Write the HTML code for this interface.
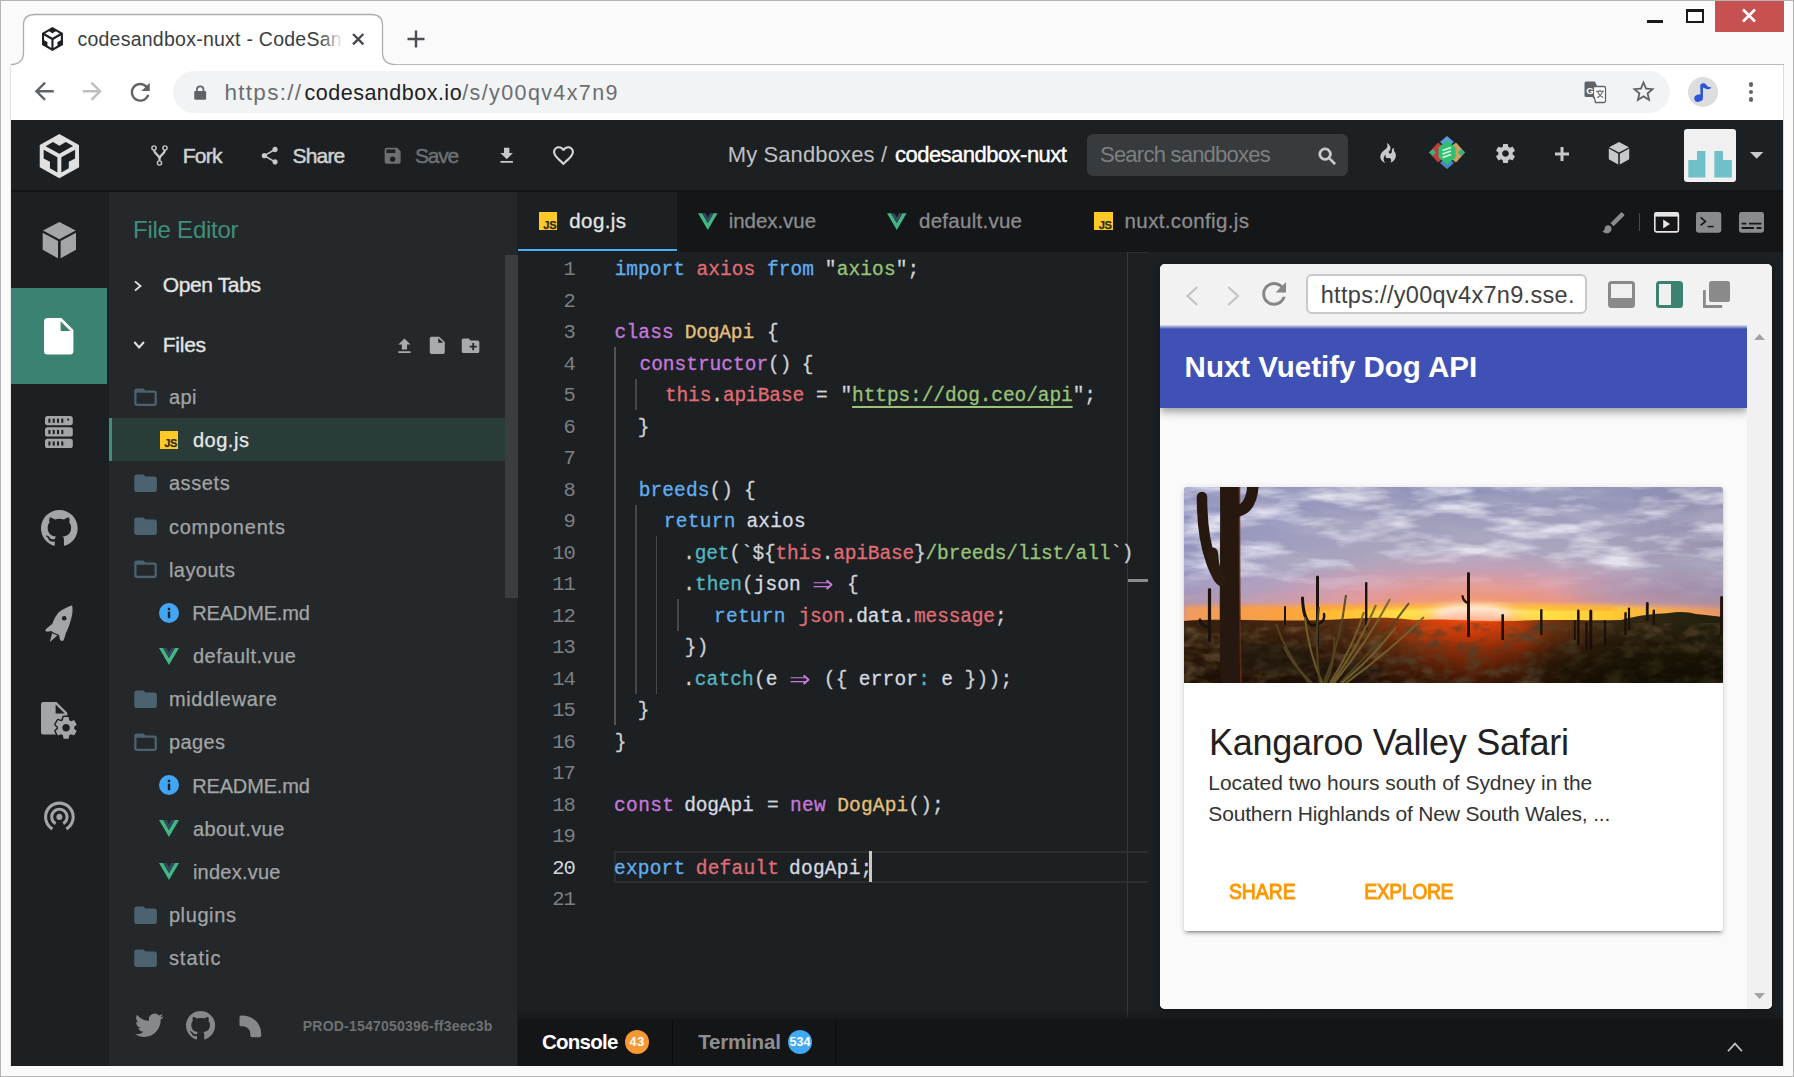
<!DOCTYPE html>
<html lang="en">
<head>
<meta charset="utf-8">
<title>codesandbox-nuxt - CodeSandbox</title>
<style>
*{box-sizing:border-box;margin:0;padding:0}
html,body{width:1794px;height:1077px;overflow:hidden;background:#fafafa}
body{position:relative;font-family:"Liberation Sans",sans-serif;color:#fff}
.a{position:absolute}
.t{position:absolute;white-space:nowrap;line-height:1}
svg{position:absolute;overflow:visible}
#frame{left:0;top:0;width:1794px;height:1077px;border:1px solid #b4b4b4;background:#fafafa}
#tabline{left:11px;top:64px;width:1773px;height:1px;background:#b9b9b9}
#toolbar{left:11px;top:65px;width:1772px;height:55px;background:#fff}
#pageL{left:10px;top:65px;width:1px;height:1002px;background:#e4e4e4}
#pageR{left:1783px;top:65px;width:1px;height:1002px;background:#dcdcdc}
#omni{left:173px;top:71px;width:1497px;height:42px;border-radius:21px;background:#f1f3f4}
#app{left:11px;top:120px;width:1772px;height:946px;background:#1c2022;overflow:hidden}
#hdr{left:0;top:0;width:1772px;height:70px;background:#1c2022}
#hdrline{left:0;top:70px;width:1772px;height:2px;background:#111517}
#nav{left:0;top:72px;width:96px;height:874px;background:#1c2022}
#navsel{left:0;top:168px;width:96px;height:96px;background:#3a8372}
#side{left:98px;top:72px;width:408px;height:874px;background:#24282a}
#sbar{display:none}
#sthumb{left:494px;top:135px;width:13px;height:343px;background:#3a3e40}
#edtabs{left:507px;top:72px;width:1265px;height:60px;background:#151618}
#tab1{left:507px;top:72px;width:159px;height:59.3px;background:#1c2022}
#editor{left:507px;top:132px;width:641px;height:767px;background:#1c2022}
#bottom{left:507px;top:899px;width:1265px;height:47px;background:#141618}
#pv{left:1149px;top:144px;width:612px;height:745px;background:#fafafa;border-radius:5px;overflow:hidden;box-shadow:0 2px 8px rgba(0,0,0,.35)}
.c{position:absolute;white-space:pre;font-family:"Liberation Mono","DejaVu Sans Mono",monospace;font-size:19.5px;line-height:31.5px;height:31.5px;-webkit-text-stroke:0.3px}
.ln{position:absolute;left:540px;width:35px;text-align:right;font-family:"Liberation Mono",monospace;font-size:20.5px;line-height:31.5px;color:#7c7f82;letter-spacing:-0.9px}

</style>
</head>
<body>
<div id="frame" class="a"></div>
<div id="tabline" class="a"></div>
<div id="toolbar" class="a"></div>
<div id="pageL" class="a"></div>
<div id="pageR" class="a"></div>
<div id="omni" class="a"></div>
<svg style="left:0px;top:0px;" width="420" height="70" viewBox="0 0 420 70"><path d="M11,64.5 C19,64.5 23.5,60 23.5,52 L23.5,25 C23.5,18 28,14.5 35,14.5 L371,14.5 C378,14.5 382.5,18 382.5,25 L382.5,52 C382.5,60 387,64.5 395,64.5 L395,66 L11,66 Z" fill="#fff"/><path d="M11,64.5 C19,64.5 23.5,60 23.5,52 L23.5,25 C23.5,18 28,14.5 35,14.5 L371,14.5 C378,14.5 382.5,18 382.5,25 L382.5,52 C382.5,60 387,64.5 395,64.5" fill="none" stroke="#adadad" stroke-width="1.3"/></svg>
<svg style="left:41px;top:27px;" width="23" height="24" viewBox="1.5 0 22 24"><path d="M2 6l10.455-6L22.91 6 23 17.95 12.455 24 2 18V6zm2.088 2.481v4.757l3.345 1.86v3.516l3.972 2.296v-8.272L4.088 8.481zm16.739 0l-7.317 4.157v8.272l3.972-2.296V15.1l3.345-1.861V8.48zM5.134 6.601l7.303 4.144 7.32-4.18-3.871-2.197-3.41 1.945-3.43-1.968L5.133 6.6z" fill="#1c2022" /></svg>
<div class="t" style="left:77.40px;top:30.07px;font-size:19.5px;color:#3a3d41;letter-spacing:0.249px;width:269px;overflow:hidden;">codesandbox-nuxt - CodeSandbox</div>
<div class="a" style="left:320px;top:24px;width:27px;height:30px;background:linear-gradient(90deg,rgba(255,255,255,0),#fff 88%)"></div>
<svg style="left:352.2px;top:33.2px;" width="12.4" height="12.4" viewBox="0 0 12 12"><path d="M1,1 L11,11 M11,1 L1,11" stroke="#46494d" stroke-width="2.3" fill="none"/></svg>
<svg style="left:407px;top:30px;" width="18" height="18" viewBox="0 0 18 18"><path d="M9,0.5 V17.5 M0.5,9 H17.5" stroke="#4a4d51" stroke-width="2.4" fill="none"/></svg>
<div class="a" style="left:1647px;top:20px;width:16px;height:3px;background:#1a1a1a"></div>
<div class="a" style="left:1686px;top:9px;width:18px;height:14px;border:2px solid #1a1a1a;border-top-width:3px;background:#fff"></div>
<div class="a" style="left:1715px;top:1px;width:69px;height:31px;background:#c75050"></div>
<svg style="left:1742px;top:9px;" width="14" height="13" viewBox="0 0 14 13"><path d="M1,0.5 L13,12.5 M13,0.5 L1,12.5" stroke="#fff" stroke-width="2.6" fill="none"/></svg>
<svg style="left:29.8px;top:77.2px;" width="28.5" height="28.5" viewBox="0 0 24 24"><path d="M20 11H7.83l5.59-5.59L12 4l-8 8 8 8 1.41-1.41L7.83 13H20v-2z" fill="#5f6368" /></svg>
<svg style="left:77.8px;top:77.2px;" width="28.5" height="28.5" viewBox="0 0 24 24"><path d="M12 4l-1.41 1.41L16.17 11H4v2h12.17l-5.58 5.59L12 20l8-8z" fill="#bcbec1" /></svg>
<svg style="left:126.4px;top:77.7px;" width="28.5" height="28.5" viewBox="0 0 24 24"><path d="M17.65 6.35C16.2 4.9 14.21 4 12 4c-4.42 0-7.99 3.58-7.99 8s3.57 8 7.99 8c3.73 0 6.84-2.55 7.73-6h-2.08c-.82 2.33-3.04 4-5.65 4-3.31 0-6-2.69-6-6s2.69-6 6-6c1.66 0 3.14.69 4.22 1.78L13 11h7V4l-2.35 2.35z" fill="#5f6368" /></svg>
<svg style="left:194px;top:85px;" width="12.4" height="15.4" viewBox="0 0 14 16"><rect x="0.3" y="6" width="13.4" height="10" rx="1.5" fill="#5f6368"/><path d="M3.3,7 V4.6 a3.7,3.7 0 0 1 7.4,0 V7" fill="none" stroke="#5f6368" stroke-width="1.9"/></svg>
<div class="t" style="left:224.50px;top:82.21px;font-size:22.5px;color:#6a6e73;letter-spacing:1.281px;">https://</div>
<div class="t" style="left:304.60px;top:82.70px;font-size:21.5px;color:#202124;letter-spacing:0.491px;">codesandbox.io</div>
<div class="t" style="left:462.20px;top:82.70px;font-size:21.5px;color:#6a6e73;letter-spacing:1.388px;">/s/y00qv4x7n9</div>
<svg style="left:1584px;top:81px;" width="22" height="22" viewBox="0 0 22 22"><path d="M2,0.5 h9 l2.2,5 h-2 V16 H2 a1.5,1.5 0 0 1 -1.5,-1.5 V2 A1.5,1.5 0 0 1 2,0.5z" fill="#5f6368"/><path d="M9.5,5.5 h10.5 a1.5,1.5 0 0 1 1.5,1.5 V20 a1.5,1.5 0 0 1 -1.5,1.5 H11.5 l-1.2,-5 h-0.8z" fill="#fff" stroke="#5f6368" stroke-width="1.3"/><path d="M12,10.2 h8 M16,8.8 v1.4 M18.6,10.2 c-0.8,3.2 -3,5.4 -5.6,6.6 M13.6,10.4 c0.9,2.8 2.8,4.8 5.6,6.2" fill="none" stroke="#5f6368" stroke-width="1.1"/><text x="2.2" y="12.6" font-family="Liberation Sans,sans-serif" font-weight="700" font-size="9.5" fill="#fff">G</text></svg>
<svg style="left:1629.5px;top:78.2px;" width="27" height="27" viewBox="0 0 24 24"><path d="M22 9.24l-7.19-.62L12 2 9.19 8.63 2 9.24l5.46 4.73L5.82 21 12 17.27 18.18 21l-1.63-7.03L22 9.24zM12 15.4l-3.76 2.27 1-4.28-3.32-2.88 4.38-.38L12 6.1l1.71 4.04 4.38.38-3.32 2.88 1 4.28L12 15.4z" fill="#5f6368" /></svg>
<div class="a" style="left:1688px;top:77px;width:30px;height:30px;border-radius:50%;background:#dcdddf"></div>
<svg style="left:1693px;top:82px;" width="20" height="21" viewBox="0 0 20 21"><ellipse cx="5.6" cy="16.2" rx="4.4" ry="3.6" fill="#2f55d4" transform="rotate(-20 5.6 16.2)"/><path d="M7.6,16 L7.2,3.2 C8.5,0.8 12,0.6 13.5,3 C14.8,5 16.6,5.6 18.4,5 C17.4,7.6 14.2,8 11.6,6.2 L10,5.6 L10,16z" fill="#2f55d4"/></svg>
<div class="a" style="left:1748.7px;top:82px;width:4.6px;height:4.6px;border-radius:50%;background:#5f6368"></div>
<div class="a" style="left:1748.7px;top:89.7px;width:4.6px;height:4.6px;border-radius:50%;background:#5f6368"></div>
<div class="a" style="left:1748.7px;top:97.3px;width:4.6px;height:4.6px;border-radius:50%;background:#5f6368"></div>
<div id="app" class="a">
<div id="hdr" class="a"></div>
<div id="hdrline" class="a"></div>
<div id="nav" class="a"></div>
<div id="navsel" class="a"></div>
<div id="side" class="a"></div>
<div id="sbar" class="a"></div>
<div id="sthumb" class="a"></div>
<div id="edtabs" class="a"></div>
<div id="tab1" class="a"></div>
<div id="editor" class="a"></div>
<div id="bottom" class="a"></div>
<div class="a" style="left:-11px;top:-120px">
<svg style="left:36.048px;top:134.2px;" width="45.024" height="44.304" viewBox="0 0 24 24" preserveAspectRatio="none"><path d="M2 6l10.455-6L22.91 6 23 17.95 12.455 24 2 18V6zm2.088 2.481v4.757l3.345 1.86v3.516l3.972 2.296v-8.272L4.088 8.481zm16.739 0l-7.317 4.157v8.272l3.972-2.296V15.1l3.345-1.861V8.48zM5.134 6.601l7.303 4.144 7.32-4.18-3.871-2.197-3.41 1.945-3.43-1.968L5.133 6.6z" fill="#e0e0e0" /></svg>
<svg style="left:150px;top:144px;" width="19" height="23" viewBox="0 0 19 23"><g fill="none" stroke="#c8c9ca" stroke-width="1.4"><circle cx="4" cy="4" r="2.1"/><circle cx="15" cy="4" r="2.1"/><circle cx="9.5" cy="19" r="2.1"/></g><path d="M4,6.2 C4.4,10 9.5,11.2 9.5,14.4 V16.8 M15,6.2 C14.6,10 9.5,11.2 9.5,14.4" fill="none" stroke="#c8c9ca" stroke-width="2.3"/></svg>
<div class="t" style="left:182.70px;top:145.34px;font-size:21px;color:#cfd0d1;letter-spacing:-0.733px;-webkit-text-stroke:0.5px #cfd0d1;">Fork</div>
<svg style="left:258.6px;top:145px;" width="21.4" height="21.4" viewBox="0 0 24 24"><path d="M18 16.08c-.76 0-1.44.3-1.96.77L8.91 12.7c.05-.23.09-.46.09-.7s-.04-.47-.09-.7l7.05-4.11c.54.5 1.25.81 2.04.81 1.66 0 3-1.34 3-3s-1.34-3-3-3-3 1.34-3 3c0 .24.04.47.09.7L8.04 9.81C7.5 9.31 6.79 9 6 9c-1.66 0-3 1.34-3 3s1.34 3 3 3c.79 0 1.5-.31 2.04-.81l7.12 4.16c-.05.21-.08.43-.08.65 0 1.61 1.31 2.92 2.92 2.92 1.61 0 2.92-1.31 2.92-2.92s-1.31-2.92-2.92-2.92z" fill="#c8c9ca" /></svg>
<div class="t" style="left:292.50px;top:145.34px;font-size:21px;color:#cfd0d1;letter-spacing:-0.810px;-webkit-text-stroke:0.5px #cfd0d1;">Share</div>
<svg style="left:381.8px;top:145.2px;" width="21.3" height="21.3" viewBox="0 0 24 24"><path d="M17 3H5c-1.11 0-2 .9-2 2v14c0 1.1.89 2 2 2h14c1.1 0 2-.9 2-2V7l-4-4zm-5 16c-1.66 0-3-1.34-3-3s1.34-3 3-3 3 1.34 3 3-1.34 3-3 3zm3-10H5V5h10v4z" fill="#6d7072" /></svg>
<div class="t" style="left:415.00px;top:145.34px;font-size:21px;color:#6d7072;letter-spacing:-1.189px;-webkit-text-stroke:0.5px #6d7072;">Save</div>
<svg style="left:495.6px;top:145.4px;" width="21.4" height="21.4" viewBox="0 0 24 24"><path d="M19 9h-4V3H9v6H5l7 7 7-7zM5 18v2h14v-2H5z" fill="#c8c9ca" /></svg>
<svg style="left:550.8px;top:142.8px;" width="25" height="25" viewBox="0 0 24 24"><path d="M16.5 3c-1.74 0-3.41.81-4.5 2.09C10.91 3.81 9.24 3 7.5 3 4.42 3 2 5.42 2 8.5c0 3.78 3.4 6.86 8.55 11.54L12 21.35l1.45-1.32C18.6 15.36 22 12.28 22 8.5 22 5.42 19.58 3 16.5 3zm-4.4 15.55l-.1.1-.1-.1C7.14 14.24 4 11.39 4 8.5 4 6.5 5.5 5 7.5 5c1.54 0 3.04.99 3.57 2.36h1.87C13.46 5.99 14.96 5 16.5 5c2 0 3.5 1.5 3.5 3.5 0 2.89-3.14 5.74-7.9 10.05z" fill="#d6d7d8" /></svg>
<div class="t" style="left:727.70px;top:143.68px;font-size:22px;color:#c0c1c2;letter-spacing:0.116px;">My Sandboxes</div>
<div class="t" style="left:881.00px;top:143.68px;font-size:22px;color:#c0c1c2;">/</div>
<div class="t" style="left:895.00px;top:143.68px;font-size:22px;color:#fff;letter-spacing:-0.526px;-webkit-text-stroke:0.4px #fff;">codesandbox-nuxt</div>
<div class="a" style="left:1087px;top:134px;width:261px;height:42px;background:#373b3d;border-radius:6px"></div>
<div class="t" style="left:1100.00px;top:144.38px;font-size:22px;color:#7d7f80;letter-spacing:-0.769px;">Search sandboxes</div>
<svg style="left:1316px;top:144.5px;" width="23" height="23" viewBox="0 0 24 24"><path d="M15.5 14h-.79l-.28-.27C15.41 12.59 16 11.11 16 9.5 16 5.91 13.09 3 9.5 3S3 5.91 3 9.5 5.91 16 9.5 16c1.61 0 3.09-.59 4.23-1.57l.27.28v.79l5 4.99L20.49 19l-4.99-5zm-6 0C7.01 14 5 11.99 5 9.5S7.01 5 9.5 5 14 7.01 14 9.5 11.99 14 9.5 14z" fill="#d0d1d2" stroke="#d0d1d2" stroke-width="0.8"/></svg>
<svg style="left:1379.8px;top:142.5px;" width="16.5" height="20" viewBox="0 0 12.2 15.4"><path d="M5.05 .01c.81 2.17.41 3.38-.52 4.31C3.55 5.37 1.98 6.15.9 7.68c-1.45 2.05-1.7 6.53 3.53 7.7-2.2-1.16-2.67-4.52-.3-6.61-.61 2.03.53 3.33 1.94 2.86 1.39-.47 2.3.53 2.27 1.67-.02.78-.31 1.44-1.13 1.81 3.42-.59 4.78-3.42 4.78-5.56 0-2.84-2.53-3.22-1.25-5.61-1.52.13-2.03 1.13-1.89 2.75.09 1.08-1.02 1.8-1.86 1.33-.67-.41-.66-1.19-.06-1.78C8.18 5 8.68 2.15 5.05.02L5.03 0l.2.01z" fill="#c8c9ca" /></svg>
<svg style="left:1429px;top:135.5px;" width="36" height="33" viewBox="0 0 36 33"><path d="M18,0 L25,6 L18,12 L11,6Z" fill="#5b9bd8"/><path d="M18,21 L25,27 L18,33 L11,27Z" fill="#4a86c5"/><path d="M0,16.5 L9,6.5 L16,12 L16,21 L9,26.5Z" fill="#c53a3a"/><path d="M0,16.5 L4,13 L7,16.5 L4,20Z" fill="#36b37e"/><path d="M36,16.5 L27,6.5 L20,12 L20,21 L27,26.5Z" fill="#c9a15e"/><path d="M36,16.5 L32,13 L29,16.5 L32,20Z" fill="#36b37e"/><path d="M18,4.5 L26.5,11.5 L26.5,21.5 L18,28.5 L9.5,21.5 L9.5,11.5Z" fill="#2fbf71"/><path d="M13.5,14.5 L22,11.5 M13.5,18 L22,15 M13.5,21.5 L22,18.5" stroke="#d8f5e4" stroke-width="1.7" fill="none"/></svg>
<svg style="left:1494px;top:142.1px;" width="23" height="23" viewBox="0 0 24 24"><path d="M19.43 12.98c.04-.32.07-.64.07-.98s-.03-.66-.07-.98l2.11-1.65c.19-.15.24-.42.12-.64l-2-3.46c-.12-.22-.39-.3-.61-.22l-2.49 1c-.52-.4-1.08-.73-1.69-.98l-.38-2.65C14.46 2.18 14.25 2 14 2h-4c-.25 0-.46.18-.49.42l-.38 2.65c-.61.25-1.17.59-1.69.98l-2.49-1c-.23-.09-.49 0-.61.22l-2 3.46c-.13.22-.07.49.12.64l2.11 1.65c-.04.32-.07.65-.07.98s.03.66.07.98l-2.11 1.65c-.19.15-.24.42-.12.64l2 3.46c.12.22.39.3.61.22l2.49-1c.52.4 1.08.73 1.69.98l.38 2.65c.03.24.24.42.49.42h4c.25 0 .46-.18.49-.42l.38-2.65c.61-.25 1.17-.59 1.69-.98l2.49 1c.23.09.49 0 .61-.22l2-3.46c.12-.22.07-.49-.12-.64l-2.11-1.65zM12 15.5c-1.93 0-3.5-1.57-3.5-3.5s1.57-3.5 3.5-3.5 3.5 1.57 3.5 3.5-1.57 3.5-3.5 3.5z" fill="#c8c9ca" /></svg>
<svg style="left:1555.4px;top:146.8px;" width="14" height="14" viewBox="0 0 14 14"><path d="M7,0 V14 M0,7 H14" stroke="#c8c9ca" stroke-width="3" fill="none"/></svg>
<svg style="left:1609.2px;top:142.3px;" width="20" height="22.4" viewBox="0 0 20 22.4"><path d="M10,0 L20,5.2 L10,10.6 L0,5.2Z M-0.2,6.6 L9.2,11.8 L9.2,22.4 L-0.2,17.2Z M20.2,6.6 L10.8,11.8 L10.8,22.4 L20.2,17.2Z" fill="#c8c9ca"/></svg>
<div class="a" style="left:1684px;top:129px;width:52px;height:53px;background:#f0f0f0;border-radius:3px"></div>
<svg style="left:1684px;top:129px;" width="52" height="53" viewBox="0 0 52 53"><path d="M4.3,48.6 V31 H13 V22 H21.4 V48.6Z M30.4,48.6 V22 H39 V31 H47.8 V48.6Z" fill="#70c0c9"/></svg>
<svg style="left:1750.2px;top:152px;" width="13.4" height="6.8" viewBox="0 0 13.4 6.8"><path d="M0,0 H13.4 L6.7,6.8Z" fill="#c8c9ca"/></svg>
<svg style="left:42.5px;top:222px;" width="32.7" height="36.3" viewBox="0 0 20 22.4" preserveAspectRatio="none"><path d="M10,0 L20,5.2 L10,10.6 L0,5.2Z M-0.2,6.6 L9.2,11.8 L9.2,22.4 L-0.2,17.2Z M20.2,6.6 L10.8,11.8 L10.8,22.4 L20.2,17.2Z" fill="#a3a5a6"/></svg>
<svg style="left:44.4px;top:317.7px;" width="29.4" height="36.6" viewBox="0 0 29.4 36.6"><path d="M3.5,0 H17.5 L29.4,12 V33.1 a3.5,3.5 0 0 1 -3.5,3.5 H3.5 a3.5,3.5 0 0 1 -3.5,-3.5 V3.5 A3.5,3.5 0 0 1 3.5,0Z" fill="#fff"/><path d="M16.6,3.2 L26.4,13 H16.6Z" fill="#3a8372"/></svg>
<svg style="left:45.2px;top:416px;" width="27.8" height="32" viewBox="0 0 27.8 32"><rect x="0" y="0" width="27.8" height="9.2" rx="2.6" fill="#a3a5a6"/><rect x="3.4" y="2.6" width="2" height="4.2" fill="#1c2022"/><rect x="7.699999999999999" y="2.6" width="2" height="4.2" fill="#1c2022"/><rect x="12.0" y="2.6" width="2" height="4.2" fill="#1c2022"/><rect x="16.299999999999997" y="2.6" width="2" height="4.2" fill="#1c2022"/><rect x="0" y="11.3" width="27.8" height="9.2" rx="2.6" fill="#a3a5a6"/><rect x="3.4" y="13.9" width="2" height="4.2" fill="#1c2022"/><rect x="7.699999999999999" y="13.9" width="2" height="4.2" fill="#1c2022"/><rect x="12.0" y="13.9" width="2" height="4.2" fill="#1c2022"/><rect x="16.299999999999997" y="13.9" width="2" height="4.2" fill="#1c2022"/><rect x="0" y="22.8" width="27.8" height="9.2" rx="2.6" fill="#a3a5a6"/><rect x="3.4" y="25.400000000000002" width="2" height="4.2" fill="#1c2022"/><rect x="7.699999999999999" y="25.400000000000002" width="2" height="4.2" fill="#1c2022"/><rect x="12.0" y="25.400000000000002" width="2" height="4.2" fill="#1c2022"/><rect x="16.299999999999997" y="25.400000000000002" width="2" height="4.2" fill="#1c2022"/><circle cx="23.2" cy="3.6" r="1.1" fill="#1c2022"/></svg>
<svg style="left:40.6px;top:509.6px;" width="36.7" height="36.7" viewBox="0 0 16 16"><path d="M8 0C3.58 0 0 3.58 0 8c0 3.54 2.29 6.53 5.47 7.59.4.07.55-.17.55-.38 0-.19-.01-.82-.01-1.49-2.01.37-2.53-.49-2.69-.94-.09-.23-.48-.94-.82-1.13-.28-.15-.68-.52-.01-.53.63-.01 1.08.58 1.23.82.72 1.21 1.87.87 2.33.66.07-.52.28-.87.51-1.07-1.78-.2-3.64-.89-3.64-3.95 0-.87.31-1.59.82-2.15-.08-.2-.36-1.02.08-2.12 0 0 .67-.21 2.2.82.64-.18 1.32-.27 2-.27.68 0 1.36.09 2 .27 1.53-1.04 2.2-.82 2.2-.82.44 1.1.16 1.92.08 2.12.51.56.82 1.27.82 2.15 0 3.07-1.87 3.75-3.65 3.95.29.25.54.73.54 1.48 0 1.07-.01 1.93-.01 2.2 0 .21.15.46.55.38A8.013 8.013 0 0 0 16 8c0-4.42-3.58-8-8-8z" fill="#a3a5a6" /></svg>
<svg style="left:44px;top:604px;" width="30" height="40" viewBox="0 0 30 40"><path d="M28.1,1.6 C22.5,3 16.5,6.6 13.4,10 C10.8,13.2 9.6,17 8.2,20 C5.6,21.8 2.8,24 1.2,26.2 C1.4,27.8 3,28 7.2,27 L9.4,28.6 L15.2,31 C15.4,33 15.6,34.8 16.2,36 C17,37.2 18.6,37.2 19.4,36.6 C20.6,34 21.2,31.6 21.8,29.3 C23.6,25.8 25,22.2 25.9,19 C27.8,14 29.4,7 28.1,1.6Z" fill="#a3a5a6"/><path d="M8.2,29.3 L5.8,38 L13.4,31.5Z" fill="#a3a5a6"/><circle cx="20.2" cy="14.2" r="2.3" fill="#1c2022"/></svg>
<svg style="left:41.3px;top:702px;" width="36" height="37" viewBox="0 0 36 37"><path d="M2.5,0 H15.5 L26.3,10.8 V32.4 H2.5 A2.5,2.5 0 0 1 0,29.9 V2.5 A2.5,2.5 0 0 1 2.5,0Z" fill="#a3a5a6"/><path d="M14.6,2.4 V11.6 H23.8Z" fill="#1c2022"/><circle cx="25.1" cy="25.8" r="6" fill="#1c2022"/><g transform="translate(12.1,12.8) scale(1.083)"><path d="M19.43 12.98c.04-.32.07-.64.07-.98s-.03-.66-.07-.98l2.11-1.65c.19-.15.24-.42.12-.64l-2-3.46c-.12-.22-.39-.3-.61-.22l-2.49 1c-.52-.4-1.08-.73-1.69-.98l-.38-2.65C14.46 2.18 14.25 2 14 2h-4c-.25 0-.46.18-.49.42l-.38 2.65c-.61.25-1.17.59-1.69.98l-2.49-1c-.23-.09-.49 0-.61.22l-2 3.46c-.13.22-.07.49.12.64l2.11 1.65c-.04.32-.07.65-.07.98s.03.66.07.98l-2.11 1.65c-.19.15-.24.42-.12.64l2 3.46c.12.22.39.3.61.22l2.49-1c.52.4 1.08.73 1.69.98l.38 2.65c.03.24.24.42.49.42h4c.25 0 .46-.18.49-.42l.38-2.65c.61-.25 1.17-.59 1.69-.98l2.49 1c.23.09.49 0 .61-.22l2-3.46c.12-.22.07-.49-.12-.64l-2.11-1.65zM12 15.5c-1.93 0-3.5-1.57-3.5-3.5s1.57-3.5 3.5-3.5 3.5 1.57 3.5 3.5-1.57 3.5-3.5 3.5z" fill="#a3a5a6" stroke="#1c2022" stroke-width="2.6" paint-order="stroke"/></g></svg>
<svg style="left:40.7px;top:797.4px;" width="36.8" height="36.8" viewBox="0 0 24 24"><path d="M12 11c-1.1 0-2 .9-2 2s.9 2 2 2 2-.9 2-2-.9-2-2-2zm6 2c0-3.31-2.69-6-6-6s-6 2.69-6 6c0 2.22 1.21 4.15 3 5.19l1-1.74c-1.19-.7-2-1.97-2-3.45 0-2.21 1.79-4 4-4s4 1.79 4 4c0 1.48-.81 2.75-2 3.45l1 1.74c1.79-1.04 3-2.97 3-5.19zM12 3C6.48 3 2 7.48 2 13c0 3.7 2.01 6.92 4.99 8.65l1-1.73C5.61 18.53 4 15.96 4 13c0-4.42 3.58-8 8-8s8 3.58 8 8c0 2.96-1.61 5.53-4 6.92l1 1.73c2.99-1.73 5-4.95 5-8.65 0-5.52-4.48-10-10-10z" fill="#a3a5a6" /></svg>
<div class="t" style="left:133.00px;top:217.88px;font-size:24px;color:#3f8f7a;letter-spacing:-0.244px;">File Editor</div>
<svg style="left:134px;top:279.5px;" width="7.6" height="12" viewBox="0 0 8.2 12"><path d="M1,1 L7,6 L1,11" fill="none" stroke="#e4e4e4" stroke-width="2"/></svg>
<div class="t" style="left:162.70px;top:274.44px;font-size:21px;color:#e4e4e4;letter-spacing:-0.361px;-webkit-text-stroke:0.35px #e4e4e4;">Open Tabs</div>
<svg style="left:132.8px;top:341px;" width="12.3" height="8" viewBox="0 0 11.6 8"><path d="M1,1 L5.8,6.5 L10.6,1" fill="none" stroke="#e4e4e4" stroke-width="2"/></svg>
<div class="t" style="left:162.70px;top:334.44px;font-size:21px;color:#e4e4e4;letter-spacing:-0.235px;-webkit-text-stroke:0.35px #e4e4e4;">Files</div>
<svg style="left:393.75px;top:335.75px;" width="20.88" height="20.4" viewBox="0 0 24 24" preserveAspectRatio="none"><path d="M9 16h6v-6h4l-7-7-7 7h4zm-4 2h14v2H5z" fill="#a8aaab" /></svg>
<svg style="left:426.24px;top:335.38px;" width="22.56" height="20.64" viewBox="0 0 24 24" preserveAspectRatio="none"><path d="M6 2c-1.1 0-1.99.9-1.99 2L4 20c0 1.1.89 2 1.99 2H18c1.1 0 2-.9 2-2V8l-6-6H6zm7 7V3.5L18.5 9H13z" fill="#a8aaab" /></svg>
<svg style="left:459.84px;top:334.7px;" width="21.12" height="21.6" viewBox="0 0 24 24" preserveAspectRatio="none"><path d="M20 6h-8l-2-2H4c-1.11 0-1.99.89-1.99 2L2 18c0 1.11.89 2 2 2h16c1.11 0 2-.89 2-2V8c0-1.11-.89-2-2-2zm-1 8h-3v3h-2v-3h-3v-2h3V9h2v3h3v2z" fill="#a8aaab" /></svg>
<div class="a" style="left:109px;top:418px;width:396px;height:42.8px;background:#2a3c3a;border-left:3px solid #3f8f7a"></div>
<svg style="left:131.94px;top:383.80px" width="27.12" height="26.40" viewBox="0 0 24 24" preserveAspectRatio="none"><path d="M20 6h-8l-2-2H4c-1.1 0-1.99.9-1.99 2L2 18c0 1.1.9 2 2 2h16c1.1 0 2-.9 2-2V8c0-1.1-.9-2-2-2zm0 12H4V8h16v10z" fill="#4c6270"/></svg>
<div class="t" style="left:168.90px;top:387.17px;font-size:20px;color:#a2a4a5;letter-spacing:0.455px;-webkit-text-stroke:0.25px #a2a4a5;">api</div>
<div class="a" style="left:159.7px;top:430.85px;width:18.2px;height:18.2px;background:#ffca28"></div><div class="t" style="left:164.25px;top:438.31px;font-size:10.92px;font-weight:700;color:#2b2a22;letter-spacing:-0.4px;-webkit-text-stroke:0.25px #2b2a22">JS</div>
<div class="t" style="left:192.90px;top:430.32px;font-size:20px;color:#e8e8e8;letter-spacing:0.526px;-webkit-text-stroke:0.25px #e8e8e8;">dog.js</div>
<svg style="left:131.94px;top:470.10px" width="27.12" height="26.40" viewBox="0 0 24 24" preserveAspectRatio="none"><path d="M10 4H4c-1.1 0-1.99.9-1.99 2L2 18c0 1.1.9 2 2 2h16c1.1 0 2-.9 2-2V8c0-1.1-.9-2-2-2h-8l-2-2z" fill="#4c6270"/></svg>
<div class="t" style="left:168.90px;top:473.47px;font-size:20px;color:#a2a4a5;letter-spacing:0.599px;-webkit-text-stroke:0.25px #a2a4a5;">assets</div>
<svg style="left:131.94px;top:513.25px" width="27.12" height="26.40" viewBox="0 0 24 24" preserveAspectRatio="none"><path d="M10 4H4c-1.1 0-1.99.9-1.99 2L2 18c0 1.1.9 2 2 2h16c1.1 0 2-.9 2-2V8c0-1.1-.9-2-2-2h-8l-2-2z" fill="#4c6270"/></svg>
<div class="t" style="left:168.90px;top:516.62px;font-size:20px;color:#a2a4a5;letter-spacing:0.783px;-webkit-text-stroke:0.25px #a2a4a5;">components</div>
<svg style="left:131.94px;top:556.40px" width="27.12" height="26.40" viewBox="0 0 24 24" preserveAspectRatio="none"><path d="M20 6h-8l-2-2H4c-1.1 0-1.99.9-1.99 2L2 18c0 1.1.9 2 2 2h16c1.1 0 2-.9 2-2V8c0-1.1-.9-2-2-2zm0 12H4V8h16v10z" fill="#4c6270"/></svg>
<div class="t" style="left:168.90px;top:559.77px;font-size:20px;color:#a2a4a5;letter-spacing:0.472px;-webkit-text-stroke:0.25px #a2a4a5;">layouts</div>
<svg style="left:159.3px;top:602.75px;" width="20" height="20" viewBox="0 0 20 20"><circle cx="10" cy="10" r="10" fill="#42a5f5"/><rect x="8.8" y="8.6" width="2.4" height="6.6" fill="#1c2022"/><rect x="8.8" y="4.8" width="2.4" height="2.4" fill="#1c2022"/></svg>
<div class="t" style="left:192.20px;top:602.92px;font-size:20px;color:#a2a4a5;letter-spacing:-0.151px;-webkit-text-stroke:0.25px #a2a4a5;">README.md</div>
<svg style="left:159.3px;top:647.6px;" width="20" height="17" viewBox="0 0 20 17"><path d="M0,0 H4.2 L10,10 L15.8,0 H20 L10,17Z" fill="#41b883"/><path d="M4.2,0 H7.6 L10,4.2 L12.4,0 H15.8 L10,10Z" fill="#35495e"/></svg>
<div class="t" style="left:192.90px;top:646.07px;font-size:20px;color:#a2a4a5;letter-spacing:0.515px;-webkit-text-stroke:0.25px #a2a4a5;">default.vue</div>
<svg style="left:131.94px;top:685.85px" width="27.12" height="26.40" viewBox="0 0 24 24" preserveAspectRatio="none"><path d="M10 4H4c-1.1 0-1.99.9-1.99 2L2 18c0 1.1.9 2 2 2h16c1.1 0 2-.9 2-2V8c0-1.1-.9-2-2-2h-8l-2-2z" fill="#4c6270"/></svg>
<div class="t" style="left:168.90px;top:689.22px;font-size:20px;color:#a2a4a5;letter-spacing:0.637px;-webkit-text-stroke:0.25px #a2a4a5;">middleware</div>
<svg style="left:131.94px;top:729.00px" width="27.12" height="26.40" viewBox="0 0 24 24" preserveAspectRatio="none"><path d="M20 6h-8l-2-2H4c-1.1 0-1.99.9-1.99 2L2 18c0 1.1.9 2 2 2h16c1.1 0 2-.9 2-2V8c0-1.1-.9-2-2-2zm0 12H4V8h16v10z" fill="#4c6270"/></svg>
<div class="t" style="left:168.90px;top:732.37px;font-size:20px;color:#a2a4a5;letter-spacing:0.377px;-webkit-text-stroke:0.25px #a2a4a5;">pages</div>
<svg style="left:159.3px;top:775.35px;" width="20" height="20" viewBox="0 0 20 20"><circle cx="10" cy="10" r="10" fill="#42a5f5"/><rect x="8.8" y="8.6" width="2.4" height="6.6" fill="#1c2022"/><rect x="8.8" y="4.8" width="2.4" height="2.4" fill="#1c2022"/></svg>
<div class="t" style="left:192.20px;top:775.52px;font-size:20px;color:#a2a4a5;letter-spacing:-0.151px;-webkit-text-stroke:0.25px #a2a4a5;">README.md</div>
<svg style="left:159.3px;top:820.2px;" width="20" height="17" viewBox="0 0 20 17"><path d="M0,0 H4.2 L10,10 L15.8,0 H20 L10,17Z" fill="#41b883"/><path d="M4.2,0 H7.6 L10,4.2 L12.4,0 H15.8 L10,10Z" fill="#35495e"/></svg>
<div class="t" style="left:192.90px;top:818.67px;font-size:20px;color:#a2a4a5;letter-spacing:0.444px;-webkit-text-stroke:0.25px #a2a4a5;">about.vue</div>
<svg style="left:159.3px;top:863.35px;" width="20" height="17" viewBox="0 0 20 17"><path d="M0,0 H4.2 L10,10 L15.8,0 H20 L10,17Z" fill="#41b883"/><path d="M4.2,0 H7.6 L10,4.2 L12.4,0 H15.8 L10,10Z" fill="#35495e"/></svg>
<div class="t" style="left:192.90px;top:861.82px;font-size:20px;color:#a2a4a5;letter-spacing:0.236px;-webkit-text-stroke:0.25px #a2a4a5;">index.vue</div>
<svg style="left:131.94px;top:901.60px" width="27.12" height="26.40" viewBox="0 0 24 24" preserveAspectRatio="none"><path d="M10 4H4c-1.1 0-1.99.9-1.99 2L2 18c0 1.1.9 2 2 2h16c1.1 0 2-.9 2-2V8c0-1.1-.9-2-2-2h-8l-2-2z" fill="#4c6270"/></svg>
<div class="t" style="left:168.90px;top:904.97px;font-size:20px;color:#a2a4a5;letter-spacing:0.603px;-webkit-text-stroke:0.25px #a2a4a5;">plugins</div>
<svg style="left:131.94px;top:944.75px" width="27.12" height="26.40" viewBox="0 0 24 24" preserveAspectRatio="none"><path d="M10 4H4c-1.1 0-1.99.9-1.99 2L2 18c0 1.1.9 2 2 2h16c1.1 0 2-.9 2-2V8c0-1.1-.9-2-2-2h-8l-2-2z" fill="#4c6270"/></svg>
<div class="t" style="left:168.90px;top:948.12px;font-size:20px;color:#a2a4a5;letter-spacing:0.964px;-webkit-text-stroke:0.25px #a2a4a5;">static</div>
<svg style="left:135.3px;top:1010.6px;" width="28.6" height="28.6" viewBox="0 0 24 24"><path d="M23.953 4.57a10 10 0 01-2.825.775 4.958 4.958 0 002.163-2.723c-.951.555-2.005.959-3.127 1.184a4.92 4.92 0 00-8.384 4.482C7.69 8.095 4.067 6.13 1.64 3.162a4.822 4.822 0 00-.666 2.475c0 1.71.87 3.213 2.188 4.096a4.904 4.904 0 01-2.228-.616v.06a4.923 4.923 0 003.946 4.827 4.996 4.996 0 01-2.212.085 4.936 4.936 0 004.604 3.417 9.867 9.867 0 01-6.102 2.105c-.39 0-.779-.023-1.17-.067a13.995 13.995 0 007.557 2.209c9.053 0 13.998-7.496 13.998-13.985 0-.21 0-.42-.015-.63A9.935 9.935 0 0024 4.59z" fill="#868889" /></svg>
<svg style="left:185.6px;top:1011.3px;" width="29.2" height="29.2" viewBox="0 0 16 16"><path d="M8 0C3.58 0 0 3.58 0 8c0 3.54 2.29 6.53 5.47 7.59.4.07.55-.17.55-.38 0-.19-.01-.82-.01-1.49-2.01.37-2.53-.49-2.69-.94-.09-.23-.48-.94-.82-1.13-.28-.15-.68-.52-.01-.53.63-.01 1.08.58 1.23.82.72 1.21 1.87.87 2.33.66.07-.52.28-.87.51-1.07-1.78-.2-3.64-.89-3.64-3.95 0-.87.31-1.59.82-2.15-.08-.2-.36-1.02.08-2.12 0 0 .67-.21 2.2.82.64-.18 1.32-.27 2-.27.68 0 1.36.09 2 .27 1.53-1.04 2.2-.82 2.2-.82.44 1.1.16 1.92.08 2.12.51.56.82 1.27.82 2.15 0 3.07-1.87 3.75-3.65 3.95.29.25.54.73.54 1.48 0 1.07-.01 1.93-.01 2.2 0 .21.15.46.55.38A8.013 8.013 0 0 0 16 8c0-4.42-3.58-8-8-8z" fill="#868889" /></svg>
<svg style="left:233.49px;top:1008.59px;" width="34.72" height="34.72" viewBox="0 0 32 32"><path d="M6 14.5A1.5 1.5 0 0 0 7.5 16H9a7 7 0 0 1 7 7v1.5a1.5 1.5 0 0 0 1.5 1.5h7a1.5 1.5 0 0 0 1.5-1.5V23c0-9.389-7.611-17-17-17H7.5A1.5 1.5 0 0 0 6 7.500v7z" fill="#868889" /></svg>
<div class="t" style="left:302.80px;top:1018.96px;font-size:14px;color:#6e7071;font-weight:700;letter-spacing:0.216px;">PROD-1547050396-ff3eec3b</div>
<div class="a" style="left:518px;top:248.7px;width:159px;height:2.6px;background:#45b1fe"></div>
<div class="a" style="left:538.7px;top:211.9px;width:18.6px;height:18.6px;background:#ffca28"></div><div class="t" style="left:543.35px;top:219.53px;font-size:11.16px;font-weight:700;color:#2b2a22;letter-spacing:-0.4px;-webkit-text-stroke:0.25px #2b2a22">JS</div>
<div class="t" style="left:569.30px;top:210.69px;font-size:20.5px;color:#e4e5e6;letter-spacing:0.419px;-webkit-text-stroke:0.3px #e4e5e6;">dog.js</div>
<svg style="left:697.5px;top:212.7px;" width="19.6" height="17.2" viewBox="0 0 20 17"><path d="M0,0 H4.2 L10,10 L15.8,0 H20 L10,17Z" fill="#41b883"/><path d="M4.2,0 H7.6 L10,4.2 L12.4,0 H15.8 L10,10Z" fill="#35495e"/></svg>
<div class="t" style="left:728.70px;top:210.69px;font-size:20.5px;color:#8a8c8e;letter-spacing:-0.045px;-webkit-text-stroke:0.3px #8a8c8e;">index.vue</div>
<svg style="left:887.4px;top:212.7px;" width="19.6" height="17.2" viewBox="0 0 20 17"><path d="M0,0 H4.2 L10,10 L15.8,0 H20 L10,17Z" fill="#41b883"/><path d="M4.2,0 H7.6 L10,4.2 L12.4,0 H15.8 L10,10Z" fill="#35495e"/></svg>
<div class="t" style="left:919.00px;top:210.69px;font-size:20.5px;color:#8a8c8e;letter-spacing:0.270px;-webkit-text-stroke:0.3px #8a8c8e;">default.vue</div>
<div class="a" style="left:1094px;top:211.9px;width:18.6px;height:18.6px;background:#ffca28"></div><div class="t" style="left:1098.65px;top:219.53px;font-size:11.16px;font-weight:700;color:#2b2a22;letter-spacing:-0.4px;-webkit-text-stroke:0.25px #2b2a22">JS</div>
<div class="t" style="left:1124.60px;top:210.69px;font-size:20.5px;color:#8a8c8e;letter-spacing:0.366px;-webkit-text-stroke:0.3px #8a8c8e;">nuxt.config.js</div>
<svg style="left:1599.7px;top:208.5px;" width="27.8" height="27.8" viewBox="0 0 24 24"><path d="M7 14c-1.66 0-3 1.34-3 3 0 1.31-1.16 2-2 2 .92 1.22 2.49 2 4 2 2.21 0 4-1.79 4-4 0-1.66-1.34-3-3-3zm13.71-9.37l-1.34-1.34c-.39-.39-1.02-.39-1.41 0L9 12.25 11.75 15l8.96-8.96c.39-.39.39-1.02 0-1.41z" fill="#8a8b8c" /></svg>
<div class="a" style="left:1639px;top:212.8px;width:1px;height:18.4px;background:#48494a"></div>
<svg style="left:1654.4px;top:211.7px;" width="25.2" height="20.7" viewBox="0 0 25.2 20.7"><rect x="0.8" y="0.8" width="23.6" height="19.1" rx="1.6" fill="none" stroke="#e6e6e6" stroke-width="1.6"/><rect x="0.8" y="0.8" width="23.6" height="3.8" fill="#e6e6e6"/><path d="M9.2,7.4 L16,11.9 L9.2,16.4Z" fill="#e6e6e6"/></svg>
<svg style="left:1696.2px;top:211.7px;" width="25.3" height="20.7" viewBox="0 0 25.3 20.7"><rect width="25.3" height="20.7" rx="2.4" fill="#8a8b8c"/><path d="M4.6,5.4 L9.4,9.4 L4.6,13.4" fill="none" stroke="#151618" stroke-width="1.7"/><path d="M11.6,14.6 H17.6" stroke="#151618" stroke-width="1.5"/></svg>
<svg style="left:1738.5px;top:211.7px;" width="25" height="20.7" viewBox="0 0 25 20.7"><rect width="25" height="20.7" rx="2.4" fill="#8a8b8c"/><path d="M2.6,11.6 H7.4 M10,11.6 H22.4 M2.6,16 H15 M17.6,16 H22.4" stroke="#151618" stroke-width="1.9"/></svg>
<div class="a" style="left:614px;top:851px;width:534px;height:31.5px;border:2px solid #2a2e30;border-right:0"></div>
<div class="a" style="left:614.4px;top:347px;width:1.3px;height:378px;background:#505456"></div>
<div class="a" style="left:635.3px;top:378.5px;width:1.3px;height:31.5px;background:#44484a"></div>
<div class="a" style="left:635.3px;top:504.5px;width:1.3px;height:189px;background:#44484a"></div>
<div class="a" style="left:656.2px;top:536px;width:1.3px;height:157.5px;background:#44484a"></div>
<div class="a" style="left:677.4px;top:599px;width:1.3px;height:31.5px;background:#44484a"></div>
<div class="a" style="left:1127.3px;top:252px;width:1px;height:766px;background:#33373a"></div>
<div class="a" style="left:1128px;top:579.3px;width:20px;height:3px;background:#8a8c8e"></div>
<div class="a" style="left:1128px;top:252px;width:20px;height:1px;background:#2c3032"></div>
<div class="ln" style="top:254.20px;color:#7c7f82">1</div>
<div class="ln" style="top:285.70px;color:#7c7f82">2</div>
<div class="ln" style="top:317.20px;color:#7c7f82">3</div>
<div class="ln" style="top:348.70px;color:#7c7f82">4</div>
<div class="ln" style="top:380.20px;color:#7c7f82">5</div>
<div class="ln" style="top:411.70px;color:#7c7f82">6</div>
<div class="ln" style="top:443.20px;color:#7c7f82">7</div>
<div class="ln" style="top:474.70px;color:#7c7f82">8</div>
<div class="ln" style="top:506.20px;color:#7c7f82">9</div>
<div class="ln" style="top:537.70px;color:#7c7f82">10</div>
<div class="ln" style="top:569.20px;color:#7c7f82">11</div>
<div class="ln" style="top:600.70px;color:#7c7f82">12</div>
<div class="ln" style="top:632.20px;color:#7c7f82">13</div>
<div class="ln" style="top:663.70px;color:#7c7f82">14</div>
<div class="ln" style="top:695.20px;color:#7c7f82">15</div>
<div class="ln" style="top:726.70px;color:#7c7f82">16</div>
<div class="ln" style="top:758.20px;color:#7c7f82">17</div>
<div class="ln" style="top:789.70px;color:#7c7f82">18</div>
<div class="ln" style="top:821.20px;color:#7c7f82">19</div>
<div class="ln" style="top:852.70px;color:#d4d6d8">20</div>
<div class="ln" style="top:884.20px;color:#7c7f82">21</div>
<div class="c" style="left:614.65px;top:255.10px;letter-spacing:0.031px"><span style="color:#61afef">import</span></div>
<div class="c" style="left:696.39px;top:255.10px;letter-spacing:0.077px"><span style="color:#e06c75">axios</span></div>
<div class="c" style="left:766.99px;top:255.10px;letter-spacing:0.067px"><span style="color:#61afef">from</span></div>
<div class="c" style="left:824.87px;top:255.10px;letter-spacing:0.104px"><span style="color:#cfd1d4">"</span><span style="color:#98c379">axios</span><span style="color:#cfd1d4">";</span></div>
<div class="c" style="left:614.47px;top:318.10px;letter-spacing:0.207px"><span style="color:#c678dd">class</span></div>
<div class="c" style="left:684.66px;top:318.10px;letter-spacing:-0.157px"><span style="color:#e5c07b">DogApi</span></div>
<div class="c" style="left:767.12px;top:318.10px;letter-spacing:0.000px"><span style="color:#cfd1d4">{</span></div>
<div class="c" style="left:639.47px;top:349.60px;letter-spacing:-0.011px"><span style="color:#c678dd">constructor</span><span style="color:#cfd1d4">()</span></div>
<div class="c" style="left:801.82px;top:349.60px;letter-spacing:0.000px"><span style="color:#cfd1d4">{</span></div>
<div class="c" style="left:664.91px;top:381.10px;letter-spacing:-0.105px"><span style="color:#e06c75">this</span><span style="color:#cfd1d4">.</span><span style="color:#e06c75">apiBase</span></div>
<div class="c" style="left:816.11px;top:381.10px;letter-spacing:0.000px"><span style="color:#cfd1d4">=</span></div>
<div class="c" style="left:840.47px;top:381.10px;letter-spacing:-0.095px"><span style="color:#cfd1d4">"</span><span style="color:#98c379;text-decoration:underline;text-decoration-thickness:2px;text-underline-offset:4.5px;text-decoration-skip-ink:none">https://dog.ceo/api</span><span style="color:#cfd1d4">";</span></div>
<div class="c" style="left:637.84px;top:412.60px;letter-spacing:0.000px"><span style="color:#cfd1d4">}</span></div>
<div class="c" style="left:638.70px;top:475.60px;letter-spacing:0.105px"><span style="color:#61afef">breeds</span><span style="color:#cfd1d4">()</span></div>
<div class="c" style="left:744.12px;top:475.60px;letter-spacing:0.000px"><span style="color:#cfd1d4">{</span></div>
<div class="c" style="left:663.70px;top:507.10px;letter-spacing:0.320px"><span style="color:#61afef">return</span></div>
<div class="c" style="left:746.39px;top:507.10px;letter-spacing:0.202px"><span style="color:#d7dae0">axios</span></div>
<div class="c" style="left:683.18px;top:538.60px;letter-spacing:-0.161px"><span style="color:#cfd1d4">.</span><span style="color:#56b6c2">get</span><span style="color:#cfd1d4">(`${</span><span style="color:#e06c75">this</span><span style="color:#cfd1d4">.</span><span style="color:#e06c75">apiBase</span><span style="color:#cfd1d4">}</span><span style="color:#98c379">/breeds/list/all</span><span style="color:#cfd1d4">`)</span></div>
<div class="c" style="left:683.18px;top:570.10px;letter-spacing:0.044px"><span style="color:#cfd1d4">.</span><span style="color:#56b6c2">then</span><span style="color:#cfd1d4">(</span><span style="color:#d7dae0">json</span></div>
<div class="c" style="left:813.30px;top:567.00px;width:20px;text-align:center;color:#c678dd;font-family:'DejaVu Sans Mono',monospace;font-size:30px;transform:scaleX(1.16);-webkit-text-stroke:0">⇒</div>
<div class="c" style="left:846.92px;top:570.10px;letter-spacing:0.000px"><span style="color:#cfd1d4">{</span></div>
<div class="c" style="left:714.10px;top:601.60px;letter-spacing:0.220px"><span style="color:#61afef">return</span></div>
<div class="c" style="left:798.49px;top:601.60px;letter-spacing:-0.148px"><span style="color:#e06c75">json</span><span style="color:#cfd1d4">.</span><span style="color:#d7dae0">data</span><span style="color:#cfd1d4">.</span><span style="color:#e06c75">message</span><span style="color:#cfd1d4">;</span></div>
<div class="c" style="left:684.82px;top:633.10px;letter-spacing:0.136px"><span style="color:#cfd1d4">})</span></div>
<div class="c" style="left:682.88px;top:664.60px;letter-spacing:0.138px"><span style="color:#cfd1d4">.</span><span style="color:#56b6c2">catch</span><span style="color:#cfd1d4">(</span><span style="color:#d7dae0">e</span></div>
<div class="c" style="left:790.40px;top:661.50px;width:20px;text-align:center;color:#c678dd;font-family:'DejaVu Sans Mono',monospace;font-size:30px;transform:scaleX(1.16);-webkit-text-stroke:0">⇒</div>
<div class="c" style="left:823.84px;top:664.60px;letter-spacing:0.136px"><span style="color:#cfd1d4">({</span></div>
<div class="c" style="left:858.75px;top:664.60px;letter-spacing:0.197px"><span style="color:#d7dae0">error</span><span style="color:#56b6c2">:</span></div>
<div class="c" style="left:941.16px;top:664.60px;letter-spacing:0.000px"><span style="color:#d7dae0">e</span></div>
<div class="c" style="left:964.62px;top:664.60px;letter-spacing:0.264px"><span style="color:#cfd1d4">}));</span></div>
<div class="c" style="left:637.84px;top:696.10px;letter-spacing:0.000px"><span style="color:#cfd1d4">}</span></div>
<div class="c" style="left:614.84px;top:727.60px;letter-spacing:0.000px"><span style="color:#cfd1d4">}</span></div>
<div class="c" style="left:614.07px;top:790.60px;letter-spacing:0.359px"><span style="color:#c678dd">const</span></div>
<div class="c" style="left:684.19px;top:790.60px;letter-spacing:-0.144px"><span style="color:#d7dae0">dogApi</span></div>
<div class="c" style="left:767.06px;top:790.60px;letter-spacing:0.000px"><span style="color:#cfd1d4">=</span></div>
<div class="c" style="left:789.90px;top:790.60px;letter-spacing:0.296px"><span style="color:#c678dd">new</span></div>
<div class="c" style="left:837.26px;top:790.60px;letter-spacing:0.142px"><span style="color:#e5c07b">DogApi</span><span style="color:#cfd1d4">();</span></div>
<div class="c" style="left:614.05px;top:853.60px;letter-spacing:0.171px"><span style="color:#61afef">export</span></div>
<div class="c" style="left:695.79px;top:853.60px;letter-spacing:0.216px"><span style="color:#e06c75">default</span></div>
<div class="c" style="left:789.09px;top:853.60px;letter-spacing:0.217px"><span style="color:#d7dae0">dogApi</span><span style="color:#cfd1d4">;</span></div>
<div class="a" style="left:868.8px;top:851.3px;width:3px;height:30.5px;background:#c8c8c8"></div>
<div class="a" style="left:518px;top:1009px;width:1265px;height:10px;background:linear-gradient(180deg,rgba(20,21,23,0),rgba(20,21,23,.55))"></div>
<div class="a" style="left:518px;top:1018.7px;width:1265px;height:48px;background:#141517"></div>
<div class="t" style="left:542.10px;top:1032.39px;font-size:20.5px;color:#fff;font-weight:700;letter-spacing:-0.778px;">Console</div>
<div class="a" style="left:625px;top:1029.7px;width:24px;height:24px;border-radius:50%;background:#f69935"></div>
<div class="t" style="left:629.60px;top:1035.69px;font-size:12.5px;color:#fff;font-weight:700;letter-spacing:0.696px;">43</div>
<div class="a" style="left:672.4px;top:1019px;width:1px;height:47px;background:#0c0d0e"></div>
<div class="t" style="left:698.20px;top:1032.39px;font-size:20.5px;color:#8e8f90;font-weight:700;letter-spacing:-0.175px;">Terminal</div>
<div class="a" style="left:788px;top:1029.7px;width:24px;height:24px;border-radius:50%;background:#40a9f3"></div>
<div class="t" style="left:789.60px;top:1035.69px;font-size:12.5px;color:#fff;font-weight:700;letter-spacing:-0.028px;">534</div>
<div class="a" style="left:835.2px;top:1019px;width:1px;height:47px;background:#0c0d0e"></div>
<svg style="left:1726.5px;top:1041.5px;" width="16" height="10" viewBox="0 0 16 10"><path d="M1,9.3 L8,1.6 L15,9.3" fill="none" stroke="#c4c4c4" stroke-width="1.7"/></svg>
</div>
<div id="pv" class="a"><div class="a" style="left:-1160px;top:-264px">
<div class="a" style="left:1160px;top:264px;width:612px;height:61px;background:#f2f2f2"></div>
<svg style="left:1186px;top:285.5px;" width="12.5" height="20" viewBox="0 0 12.5 20"><path d="M11.2,1 L1.6,10 L11.2,19" fill="none" stroke="#c4c4c4" stroke-width="2.2"/></svg>
<svg style="left:1226.5px;top:285.5px;" width="12.5" height="20" viewBox="0 0 12.5 20"><path d="M1.3,1 L10.9,10 L1.3,19" fill="none" stroke="#c4c4c4" stroke-width="2.2"/></svg>
<svg style="left:1255.96px;top:276.04px;" width="36.24" height="35.76" viewBox="0 0 24 24"><path d="M17.65 6.35C16.2 4.9 14.21 4 12 4c-4.42 0-7.99 3.58-7.99 8s3.57 8 7.99 8c3.73 0 6.84-2.55 7.73-6h-2.08c-.82 2.33-3.04 4-5.65 4-3.31 0-6-2.69-6-6s2.69-6 6-6c1.66 0 3.14.69 4.22 1.78L13 11h7V4l-2.35 2.35z" fill="#868686" /></svg>
<div class="a" style="left:1306.3px;top:274.4px;width:281.2px;height:39.2px;background:#fff;border:2px solid #c9c9c9;border-radius:6px"></div>
<div class="t" style="left:1320.70px;top:284.42px;font-size:23.5px;color:#404040;letter-spacing:0.314px;">https://y00qv4x7n9.sse.</div>
<div class="a" style="left:1608px;top:281px;width:27px;height:27px;background:#8a8a8a;border-radius:3.5px"></div>
<div class="a" style="left:1611.3px;top:284.3px;width:20.8px;height:13.7px;background:#f0f0f0"></div>
<div class="a" style="left:1656px;top:281px;width:27px;height:27px;background:#3d8271;border-radius:3.5px"></div>
<div class="a" style="left:1659.1px;top:284.3px;width:12.2px;height:20.5px;background:#f0f0f0"></div>
<div class="a" style="left:1708.7px;top:281px;width:21.4px;height:21px;background:#8a8a8a;border-radius:2.5px"></div>
<svg style="left:1703px;top:290px;" width="20" height="18" viewBox="0 0 20 18"><path d="M1.4,0 V16.5 H19.2" fill="none" stroke="#8a8a8a" stroke-width="2.8"/></svg>
<div class="a" style="left:1160px;top:324.6px;width:587px;height:684.4px;overflow:hidden"><div class="a" style="left:-1160px;top:-324.6px">
<div class="a" style="left:1160px;top:324.6px;width:587px;height:684.4px;background:#fafafa"></div>
<div class="a" style="left:1184px;top:487px;width:539px;height:444px;background:#fff;border-radius:3px;box-shadow:0 4.5px 1.5px -3px rgba(0,0,0,.2),0 3px 3px rgba(0,0,0,.14),0 1.5px 7.5px rgba(0,0,0,.12)"></div>
<svg style="left:1184px;top:487px;border-radius:3px 3px 0 0;overflow:hidden" width="539" height="196" viewBox="0 0 539 196"><defs><linearGradient id="sky" x1="0" y1="0" x2="0" y2="1"><stop offset="0" stop-color="#9092b8"/><stop offset="0.3" stop-color="#a2a0bd"/><stop offset="0.6" stop-color="#b0a7be"/><stop offset="0.76" stop-color="#c9a5ba"/><stop offset="0.9" stop-color="#e6a296"/><stop offset="1" stop-color="#f4a070"/></linearGradient><linearGradient id="skyl" x1="0" y1="0" x2="1" y2="0"><stop offset="0" stop-color="#7f88c4" stop-opacity="0.5"/><stop offset="0.35" stop-color="#8a8fc4" stop-opacity="0"/><stop offset="0.75" stop-color="#8a84a8" stop-opacity="0"/><stop offset="1" stop-color="#857e9e" stop-opacity="0.45"/></linearGradient><radialGradient id="glow" cx="0.5" cy="0.5" r="0.5"><stop offset="0" stop-color="#ff9c50" stop-opacity="0.95"/><stop offset="0.4" stop-color="#f0907a" stop-opacity="0.7"/><stop offset="0.75" stop-color="#e394a4" stop-opacity="0.3"/><stop offset="1" stop-color="#e090a8" stop-opacity="0"/></radialGradient><linearGradient id="band" x1="0" y1="0" x2="1" y2="0"><stop offset="0" stop-color="#f29a5e"/><stop offset="0.18" stop-color="#fba040"/><stop offset="0.3" stop-color="#ffc233"/><stop offset="0.42" stop-color="#ffe24a"/><stop offset="0.535" stop-color="#fffbd0"/><stop offset="0.66" stop-color="#ffe244"/><stop offset="0.8" stop-color="#ffc832"/><stop offset="0.9" stop-color="#f8aa4a"/><stop offset="1" stop-color="#e8946a"/></linearGradient><linearGradient id="gnd" x1="0" y1="0" x2="1" y2="0"><stop offset="0" stop-color="#36200e"/><stop offset="0.3" stop-color="#562c11"/><stop offset="0.46" stop-color="#c2440e"/><stop offset="0.535" stop-color="#ff4a08"/><stop offset="0.61" stop-color="#a83c0e"/><stop offset="0.78" stop-color="#3a2a12"/><stop offset="1" stop-color="#1e200e"/></linearGradient><linearGradient id="gdark" x1="0" y1="0" x2="0" y2="1"><stop offset="0" stop-color="#1a0e06" stop-opacity="0"/><stop offset="0.5" stop-color="#1a0e06" stop-opacity="0.5"/><stop offset="1" stop-color="#140a04" stop-opacity="0.82"/></linearGradient><filter id="cl" x="0" y="0" width="100%" height="100%"><feTurbulence type="fractalNoise" baseFrequency="0.013 0.055" numOctaves="4" seed="7"/><feColorMatrix values="0 0 0 0 0.93  0 0 0 0 0.92  0 0 0 0 0.98  3.4 0 0 0 -1.55"/></filter><filter id="cd" x="0" y="0" width="100%" height="100%"><feTurbulence type="fractalNoise" baseFrequency="0.010 0.045" numOctaves="3" seed="23"/><feColorMatrix values="0 0 0 0 0.44  0 0 0 0 0.42  0 0 0 0 0.56  0 3 0 0 -1.3"/></filter><filter id="gt" x="0" y="0" width="100%" height="100%"><feTurbulence type="fractalNoise" baseFrequency="0.05 0.09" numOctaves="3" seed="4"/><feColorMatrix values="0 0 0 0 0.08  0 0 0 0 0.05  0 0 0 0 0.02  3 0 0 0 -1.3"/></filter><filter id="gl" x="0" y="0" width="100%" height="100%"><feTurbulence type="fractalNoise" baseFrequency="0.06 0.11" numOctaves="2" seed="11"/><feColorMatrix values="0 0 0 0 0.62  0 0 0 0 0.36  0 0 0 0 0.14  0 3 0 0 -1.55"/></filter><filter id="b2" x="-5%" y="-50%" width="110%" height="200%"><feGaussianBlur stdDeviation="2"/></filter><filter id="b5" x="-30%" y="-100%" width="160%" height="300%"><feGaussianBlur stdDeviation="5"/></filter><filter id="b9" x="-30%" y="-100%" width="160%" height="300%"><feGaussianBlur stdDeviation="9"/></filter><linearGradient id="mg" x1="0" y1="0" x2="1" y2="0"><stop offset="0" stop-color="#fff"/><stop offset="0.36" stop-color="#fff"/><stop offset="0.5" stop-color="#000"/><stop offset="0.64" stop-color="#444"/><stop offset="1" stop-color="#555"/></linearGradient><mask id="mk"><rect width="539" height="196" fill="url(#mg)"/></mask><linearGradient id="mvg" x1="0" y1="0" x2="0" y2="1"><stop offset="0" stop-color="#fff"/><stop offset="0.62" stop-color="#fff"/><stop offset="0.95" stop-color="#000"/></linearGradient><mask id="mv"><rect width="539" height="124" fill="url(#mvg)"/></mask><clipPath id="ic"><rect x="0" y="0" width="539" height="196"/></clipPath></defs><g clip-path="url(#ic)"><rect width="539" height="134" fill="url(#sky)"/><rect width="539" height="134" fill="url(#skyl)"/><g mask="url(#mv)"><rect width="539" height="124" filter="url(#cd)" opacity="0.7"/><rect width="539" height="124" filter="url(#cl)" opacity="0.75"/></g><ellipse cx="290" cy="126" rx="235" ry="62" fill="url(#glow)"/><ellipse cx="480" cy="106" rx="95" ry="10" fill="#8a83a6" opacity="0.6" filter="url(#b9)"/><path d="M0,119 C60,117 150,120 220,118.5 C300,117 380,118 460,119.5 L539,121 V137 H0Z" fill="url(#band)" filter="url(#b2)"/><path d="M120,121 C200,118 330,119 430,122" fill="none" stroke="#ff9a30" stroke-width="3.5" opacity="0.8" filter="url(#b2)"/><ellipse cx="288" cy="127.5" rx="40" ry="9" fill="#fffce6" filter="url(#b5)"/><ellipse cx="288" cy="127.5" rx="34" ry="7.5" fill="#fffef0" filter="url(#b2)"/><path d="M0,134 C40,131 90,135 140,133 C180,131 200,129 230,133 C260,131 290,135 330,134 C370,132 400,134 437,133 C455,128 470,127 485,126 C495,124 505,125 512,127 C522,128 530,129 539,130 V196 H0Z" fill="url(#gnd)"/><ellipse cx="288" cy="152" rx="66" ry="24" fill="#ff4a0a" opacity="0.6" filter="url(#b9)"/><rect y="132" width="539" height="64" fill="url(#gdark)"/><rect y="136" width="539" height="60" filter="url(#gt)" opacity="0.8"/><g mask="url(#mk)"><rect y="140" width="539" height="56" filter="url(#gl)" opacity="0.27"/></g><path d="M23.9,155 V102.6 a1.60,1.60 0 0 1 3.2,0 V155Z" fill="#1d120c"/><path d="M100.0,138 V120.0 a1.00,1.00 0 0 1 2.0,0 V138Z" fill="#1d120c"/><path d="M132.0,160 V90.0 a1.50,1.50 0 0 1 3.0,0 V160Z" fill="#1d120c"/><path d="M181.0,143 V96.2 a1.20,1.20 0 0 1 2.4,0 V143Z" fill="#1d120c"/><path d="M283.0,150 V86.5 a1.50,1.50 0 0 1 3.0,0 V150Z" fill="#1d120c"/><path d="M317.4,153 V128.3 a1.30,1.30 0 0 1 2.6,0 V153Z" fill="#1d120c"/><path d="M356.1,148 V123.2 a1.20,1.20 0 0 1 2.4,0 V148Z" fill="#1d120c"/><path d="M393.0,158 V123.8 a1.30,1.30 0 0 1 2.6,0 V158Z" fill="#1d120c"/><path d="M405.3,163 V124.0 a1.50,1.50 0 0 1 3.0,0 V163Z" fill="#1d120c"/><path d="M401.3,163 V136.2 a1.20,1.20 0 0 1 2.4,0 V163Z" fill="#1d120c"/><path d="M389.8,153 V134.0 a1.00,1.00 0 0 1 2.0,0 V153Z" fill="#1d120c"/><path d="M419.9,158 V134.1 a1.10,1.10 0 0 1 2.2,0 V158Z" fill="#1d120c"/><path d="M440.3,148 V126.2 a1.20,1.20 0 0 1 2.4,0 V148Z" fill="#1d120c"/><path d="M443.9,143 V121.6 a1.10,1.10 0 0 1 2.2,0 V143Z" fill="#1d120c"/><path d="M461.9,134 V116.4 a1.40,1.40 0 0 1 2.8,0 V134Z" fill="#1d120c"/><path d="M468.6,138 V123.7 a1.20,1.20 0 0 1 2.4,0 V138Z" fill="#1d120c"/><path d="M536.1,148 V110.5 a1.50,1.50 0 0 1 3.0,0 V148Z" fill="#1d120c"/><path d="M118.5,111 C119,125 121,133 127,138 L132,138" fill="none" stroke="#1d120c" stroke-width="3" stroke-linecap="round"/><path d="M140,127 C141,132 139,135 135,137" fill="none" stroke="#1d120c" stroke-width="2.4" stroke-linecap="round"/><path d="M16,133 C17,138 20,140 25,140" fill="none" stroke="#1d120c" stroke-width="3" stroke-linecap="round"/><path d="M278.5,109 C279,113 281,115 284,116" fill="none" stroke="#1d120c" stroke-width="2.2" stroke-linecap="round"/><ellipse cx="90" cy="170" rx="45" ry="16" fill="#1c1208" opacity="0.6" filter="url(#b5)"/><ellipse cx="150" cy="186" rx="50" ry="12" fill="#1c1208" opacity="0.55" filter="url(#b5)"/><ellipse cx="460" cy="182" rx="110" ry="24" fill="#0e0e06" opacity="0.5" filter="url(#b9)"/><path d="M125,196 Q102,166 92,137" fill="none" stroke="#54451f" stroke-width="2.1" opacity="0.9"/><path d="M138,196 Q124,163 121,130" fill="none" stroke="#75622c" stroke-width="2.1" opacity="0.9"/><path d="M140,196 Q157,152 162,108" fill="none" stroke="#54451f" stroke-width="2.1" opacity="0.9"/><path d="M150,196 Q184,154 206,112" fill="none" stroke="#75622c" stroke-width="2.1" opacity="0.9"/><path d="M156,196 Q196,156 225,116" fill="none" stroke="#54451f" stroke-width="2.1" opacity="0.9"/><path d="M146,196 Q169,160 180,125" fill="none" stroke="#75622c" stroke-width="2.1" opacity="0.9"/><path d="M128,196 Q108,178 100,160" fill="none" stroke="#54451f" stroke-width="2.1" opacity="0.9"/><path d="M162,196 Q207,163 240,130" fill="none" stroke="#75622c" stroke-width="2.1" opacity="0.9"/><path d="M142,196 Q152,173 150,150" fill="none" stroke="#54451f" stroke-width="2.1" opacity="0.9"/><path d="M158,196 Q191,168 212,140" fill="none" stroke="#75622c" stroke-width="2.1" opacity="0.9"/><path d="M136,196 Q130,158 135,120" fill="none" stroke="#54451f" stroke-width="2.1" opacity="0.9"/><path d="M148,196 Q176,157 192,118" fill="none" stroke="#75622c" stroke-width="2.1" opacity="0.9"/><path d="M36.5,196 C35,150 36.5,60 36,0 H55.5 C55.5,60 56,150 57,196Z" fill="#26170f"/><path d="M55.5,0 C55.5,60 56,150 57,196" stroke="#6a2e1c" stroke-width="1.6" fill="none" opacity="0.8"/><path d="M18,10 C18,36 21,58 27,74 C31,86 35,92 41,94" fill="none" stroke="#26170f" stroke-width="10.5" stroke-linecap="round"/><path d="M28.5,66 C29.5,80 32,90 38,94" fill="none" stroke="#2a1a10" stroke-width="11" stroke-linecap="round"/><path d="M54,24 C62,22 68,14 69,-2" fill="none" stroke="#26170f" stroke-width="11.5" stroke-linecap="round"/></g></svg>
<div class="t" style="left:1209.00px;top:725.33px;font-size:36px;color:#212121;letter-spacing:-0.265px;">Kangaroo Valley Safari</div>
<div class="t" style="left:1208.30px;top:772.22px;font-size:21px;color:#333;letter-spacing:-0.032px;">Located two hours south of Sydney in the</div>
<div class="t" style="left:1208.30px;top:803.02px;font-size:21px;color:#333;letter-spacing:-0.169px;">Southern Highlands of New South Wales, ...</div>
<div class="t" style="left:1228.90px;top:883.28px;font-size:19.4px;color:#ff9800;letter-spacing:-0.010px;-webkit-text-stroke:0.9px #ff9800;transform:scaleY(1.12);transform-origin:0 84.65%;">SHARE</div>
<div class="t" style="left:1364.20px;top:883.28px;font-size:19.4px;color:#ff9800;letter-spacing:-0.391px;-webkit-text-stroke:0.9px #ff9800;transform:scaleY(1.12);transform-origin:0 84.65%;">EXPLORE</div>
<div class="a" style="left:1160px;top:324.6px;width:587px;height:83.4px;background:#3f51b5;box-shadow:0 3px 6px -1.5px rgba(0,0,0,.2),0 6px 7.5px rgba(0,0,0,.14),0 1.5px 15px rgba(0,0,0,.12)"></div>
<div class="t" style="left:1184.60px;top:351.73px;font-size:29.5px;color:#fff;font-weight:700;letter-spacing:-0.017px;">Nuxt Vuetify Dog API</div>
</div></div>
<div class="a" style="left:1747px;top:324.6px;width:25px;height:684.4px;background:#f1f1f1"></div>
<svg style="left:1754px;top:334px;" width="11" height="6" viewBox="0 0 11 6"><path d="M0,6 L5.5,0 L11,6Z" fill="#a3a3a3"/></svg>
<svg style="left:1754px;top:993px;" width="11" height="6" viewBox="0 0 11 6"><path d="M0,0 L5.5,6 L11,0Z" fill="#a3a3a3"/></svg>
<div class="a" style="left:1160px;top:324.6px;width:612px;height:4px;background:linear-gradient(180deg,rgba(242,242,242,.9),rgba(242,242,242,0))"></div>
</div></div>
</div>
</body>
</html>
